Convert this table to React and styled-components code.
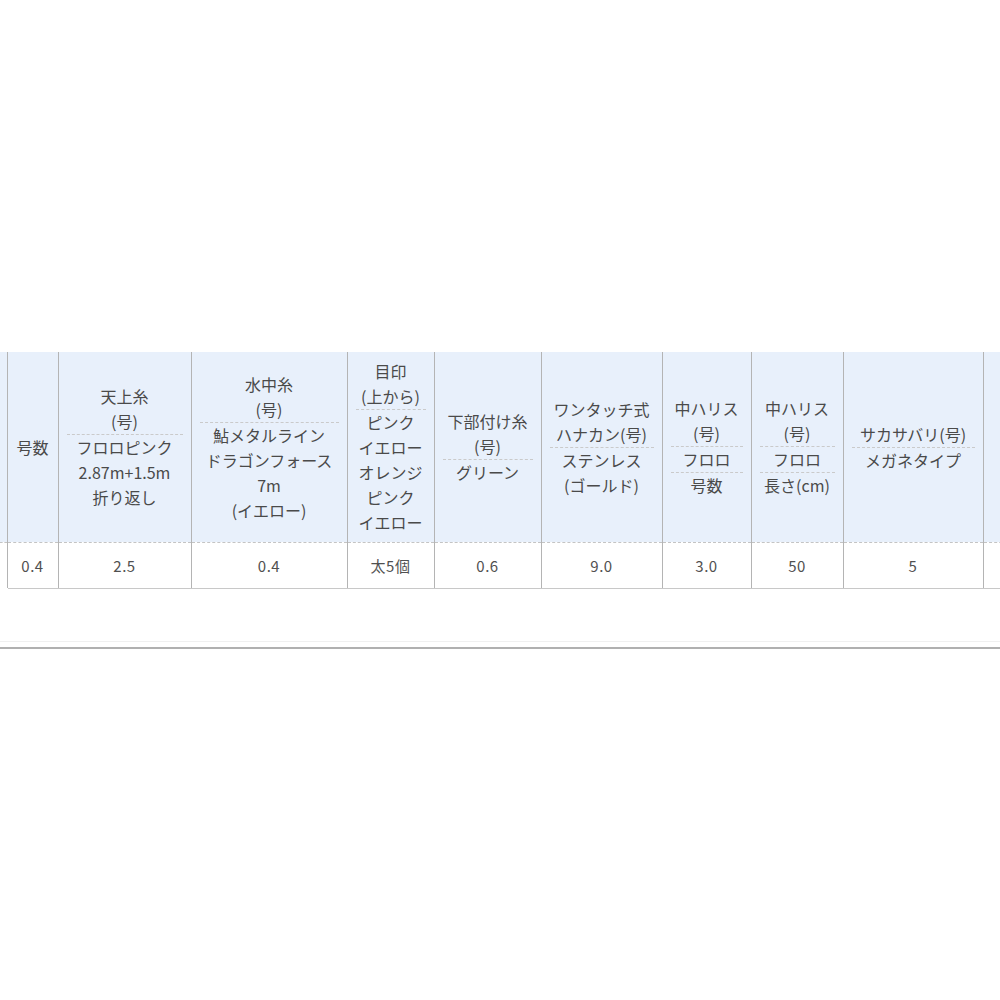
import { Fragment } from 'react';
import styled, { createGlobalStyle } from 'styled-components';

const GlobalStyle = createGlobalStyle`
  html, body {
    margin: 0;
    padding: 0;
    background: #fff;
  }
  body {
    font-family: "Noto Sans CJK JP", "Noto Sans", sans-serif;
    color: #4a4a4a;
  }
`;

const Page = styled.div`
  width: 1000px;
  height: 1000px;
  overflow: hidden;
  padding-top: 352px;
  box-sizing: border-box;
`;

const Table = styled.table`
  border-collapse: collapse;
  table-layout: fixed;
  width: 1043px;
  font-size: 16px;
  line-height: 25px;
`;

const HeadCell = styled.th`
  background: #e8f0fb;
  font-weight: 400;
  height: 190px;
  padding: 0 8px;
  text-align: center;
  vertical-align: middle;
  border-left: 1px solid #b4b4b4;
  border-bottom: 1px dashed #c4c4c4;
  white-space: nowrap;
  overflow: hidden;
  &:first-child {
    border-left: none;
  }
`;

const Part = styled.div`
  border-bottom: ${(p) => (p.$split ? '1px dashed #cacaca' : 'none')};
`;

const BodyCell = styled.td`
  height: 45px;
  padding: 0 6px;
  text-align: center;
  vertical-align: middle;
  font-size: 15px;
  color: #505050;
  letter-spacing: 0.5px;
  border-left: 1px solid #b4b4b4;
  border-bottom: 1px solid #c8c8c8;
  white-space: nowrap;
  overflow: hidden;
  &:first-child {
    border-left: none;
    border-bottom-color: transparent;
  }
`;

const Rule = styled.div`
  margin-top: 52px;
  border-top: 1px solid #f0f0f0;
  padding-top: 5px;
  &::after {
    content: '';
    display: block;
    border-top: 2px solid #b0b0b0;
  }
`;

const columns = [
  { width: 7, head: [[]], value: '' },
  { width: 51, head: [['号数']], value: '0.4' },
  { width: 133, head: [['天上糸', '(号)'], ['フロロピンク', '2.87m+1.5m', '折り返し']], value: '2.5' },
  { width: 156, head: [['水中糸', '(号)'], ['鮎メタルライン', 'ドラゴンフォース', '7m', '(イエロー)']], value: '0.4' },
  { width: 87, head: [['目印', '(上から)'], ['ピンク', 'イエロー', 'オレンジ', 'ピンク', 'イエロー']], value: '太5個' },
  { width: 107, head: [['下部付け糸', '(号)'], ['グリーン']], value: '0.6' },
  { width: 121, head: [['ワンタッチ式', 'ハナカン(号)'], ['ステンレス', '(ゴールド)']], value: '9.0' },
  { width: 89, head: [['中ハリス', '(号)'], ['フロロ'], ['号数']], value: '3.0' },
  { width: 92, head: [['中ハリス', '(号)'], ['フロロ'], ['長さ(cm)']], value: '50' },
  { width: 140, head: [['サカサバリ(号)'], ['メガネタイプ']], value: '5' },
  { width: 60, head: [[]], value: '' },
];

const App = () => {
  return (
    <Fragment>
      <GlobalStyle />
      <Page>
        <Table>
          <colgroup>
            {columns.map((c, i) => (
              <col key={i} style={{ width: c.width }} />
            ))}
          </colgroup>
          <thead>
            <tr>
              {columns.map((c, i) => (
                <HeadCell key={i}>
                  {c.head.map((part, j) => (
                    <Part key={j} $split={j < c.head.length - 1}>
                      {part.map((line, k) => (
                        <div key={k}>{line}</div>
                      ))}
                    </Part>
                  ))}
                </HeadCell>
              ))}
            </tr>
          </thead>
          <tbody>
            <tr>
              {columns.map((c, i) => (
                <BodyCell key={i}>{c.value}</BodyCell>
              ))}
            </tr>
          </tbody>
        </Table>
        <Rule />
      </Page>
    </Fragment>
  );
};

export default App;
